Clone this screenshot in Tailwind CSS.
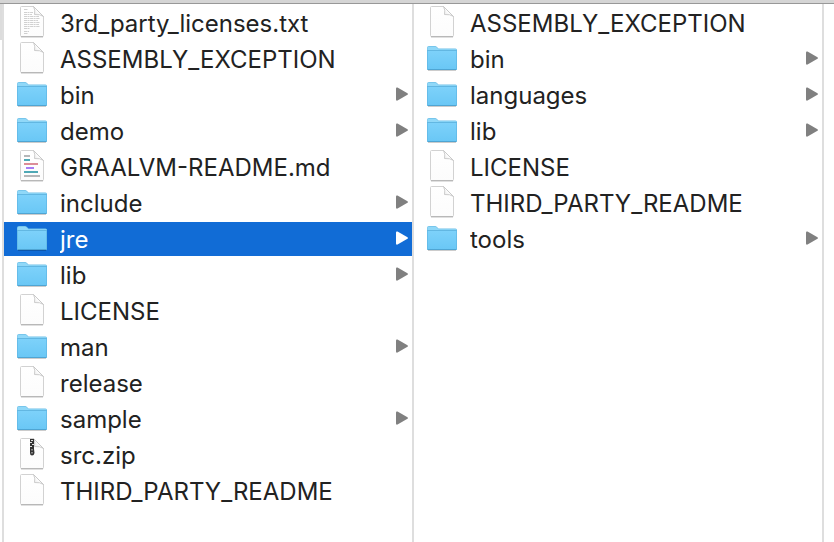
<!DOCTYPE html>
<html lang="en">
<head>
<meta charset="utf-8">
<title>Files</title>
<script src="https://cdn.jsdelivr.net/npm/@tailwindcss/browser@4"></script>
</head>
<body class="flex min-h-screen flex-col overflow-x-hidden bg-white font-[Inter,sans-serif] text-2xl text-[#222222]">
<svg class="absolute size-0" aria-hidden="true">
  <defs>
    <linearGradient id="paper" x1="0" y1="0" x2="0" y2="1"><stop offset="0" stop-color="#ffffff"/><stop offset="1" stop-color="#fcfcfc"/></linearGradient>
    <linearGradient id="sky" x1="0" y1="0" x2="0" y2="1"><stop offset="0" stop-color="#7dd1fa"/><stop offset="1" stop-color="#69c7f5"/></linearGradient>
    <linearGradient id="fold" x1="0" y1="1" x2="1" y2="0"><stop offset="0" stop-color="#e4e4e4"/><stop offset="0.5" stop-color="#ffffff"/></linearGradient>
  </defs>
  <symbol id="file" viewBox="0 0 32 34">
    <path d="M5 31.5H27" stroke="#000" stroke-opacity=".12"/>
    <path d="M5.5 .5H17.5L27.5 10.5V29.5Q27.5 30.5 26.5 30.5H5.5Q4.5 30.5 4.5 29.5V1.5Q4.5 .5 5.5 .5Z" fill="url(#paper)" stroke="#d2d2d2"/>
    <path d="M5 30.5H27" stroke="#b8b8b8"/>
    <path d="M17.5 .5L27.5 10.5Q24 8 18.5 8.5Q19.5 4 17.5 .5Z" fill="url(#fold)" stroke="#c2c2c2" stroke-width=".8"/>
  </symbol>
  <symbol id="folder" viewBox="0 0 32 34">
    <path d="M2 28.5H30" stroke="#000" stroke-opacity=".2"/>
    <path d="M1 6Q1 4 3 4H9Q10 4 11 5L12.5 6.5H29.5Q31 6.500 31 8V12H1Z" fill="#6fc0e8"/>
    <path d="M1.5 6Q1.5 4.7 3 4.7H9Q10 4.7 11 5.7L12.5 7.2H30.5V9H1.5Z" fill="#90d8f8"/>
    <path d="M1 9H31V27Q31 28 30 28H2Q1 28 1 27Z" fill="url(#sky)"/>
    <path d="M1 8.5H31" stroke="#62b7e2"/>
    <path d="M1.5 9V27M30.5 9V27" stroke="#5fb7e4" stroke-opacity=".7"/>
    <path d="M1.5 27.5H30.5" stroke="#4fa5d3"/>
  </symbol>
  <symbol id="text" viewBox="0 0 32 34">
    <use href="#file" width="32" height="34"/>
    <path d="M8 3.5H12M8 6.5H17M8 8.5H16M8 10.5H23M8 12.5H24M8 14.5H22M8 16.5H24M8 18.5H23M8 20.5H24M8 22.5H14M8 25.5H13M8 27.5H12" stroke="#999" stroke-opacity=".5" stroke-dasharray="3 .5 2 .6" stroke-width=".9"/>
  </symbol>
  <symbol id="markdown" viewBox="0 0 32 34">
    <use href="#file" width="32" height="34"/>
    <g stroke-width="2">
      <path d="M8 6H14M8 26H24" stroke="#b5b7b9"/>
      <path d="M8 10H14M8 22H22" stroke="#4fa9b6"/>
      <path d="M8 14H22" stroke="#dc8d98"/>
      <path d="M10 18H18" stroke="#a77df5"/>
    </g>
  </symbol>
  <symbol id="zip" viewBox="0 0 32 34">
    <use href="#file" width="32" height="34"/>
    <path d="M14 1H18V11L18.500 15Q18 17.500 16 17.500Q14 17.500 14 15Z" fill="#333"/>
    <path d="M15 2.5H17M14 4.5H16M16 6.5H18M14 8.500H16M16 11V12.500M16 14V15.500" stroke="#ddd"/>
  </symbol>
  <symbol id="arrow" viewBox="0 0 12 14">
    <path d="M0 1.5Q0 0 1.5 .5L11.5 6.2Q12.3 7 11.5 7.8L1.5 13.5Q0 14 0 12.5Z" fill="currentColor"/>
  </symbol>
</svg>
<header class="h-1 shrink-0 border-b border-[#989898] bg-[#d5d5d5]"></header>
<main class="flex grow">
  <div class="w-0.5 shrink-0"><div class="h-9 bg-[#dcdcdc]"></div></div>
  <ul id="home" aria-label="Home folder" class="flex min-w-0 flex-1 flex-col gap-0.5 border-l-2 border-[#dedede] pt-0.5"></ul>
  <ul id="jre" aria-label="jre" class="flex min-w-0 flex-1 flex-col gap-0.5 border-x-2 border-[#dedede] pt-0.5"></ul>
  <div class="w-2.5 shrink-0"></div>
</main>
<script>
const columns = {
  home: [['3rd_party_licenses.txt', 'text'], ['ASSEMBLY_EXCEPTION', 'file'], ['bin', 'folder'], ['demo', 'folder'],
    ['GRAALVM-README.md', 'markdown'], ['include', 'folder'], ['jre', 'folder', true], ['lib', 'folder'], ['LICENSE', 'file'],
    ['man', 'folder'], ['release', 'file'], ['sample', 'folder'], ['src.zip', 'zip'], ['THIRD_PARTY_README', 'file']],
  jre: [['ASSEMBLY_EXCEPTION', 'file'], ['bin', 'folder'], ['languages', 'folder'], ['lib', 'folder'], ['LICENSE', 'file'],
    ['THIRD_PARTY_README', 'file'], ['tools', 'folder']]
};
for (const [id, rows] of Object.entries(columns)) {
  document.getElementById(id).innerHTML = rows.map(([name, icon, selected]) => `
    <li><button class="flex h-[34px] w-full items-center gap-3 pl-3 pr-1 text-left ${selected ? 'bg-[#116cd6] text-white' : ''}">
      <svg class="h-[34px] w-8 shrink-0" aria-hidden="true"><use href="#${icon}"/></svg>
      <span class="grow truncate pt-0.5 leading-8">${name}</span>
      ${icon === 'folder' ? `<svg class="mb-0.5 h-3.5 w-3 shrink-0 ${selected ? 'text-white' : 'text-[#808080]'}" aria-hidden="true"><use href="#arrow"/></svg>` : ''}
    </button></li>`).join('');
}
</script>
</body>
</html>
